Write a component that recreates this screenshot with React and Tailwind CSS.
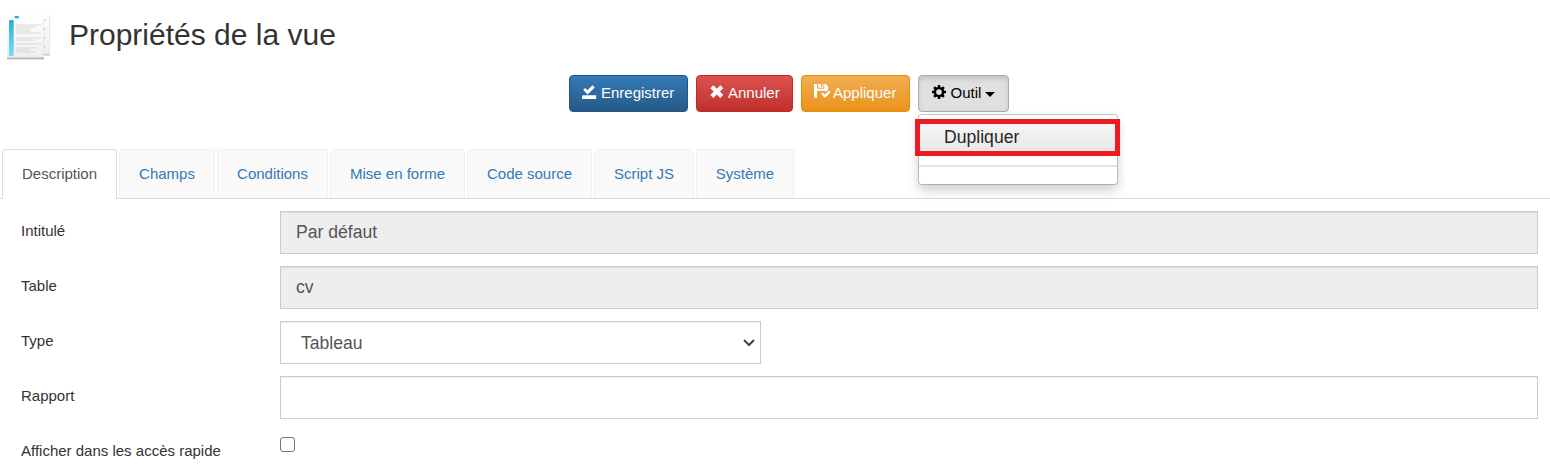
import React from "react";

const tabs = [
  { label: "Champs", width: "w-[96px]" },
  { label: "Conditions", width: "w-[111px]" },
  { label: "Mise en forme", width: "w-[135px]" },
  { label: "Code source", width: "w-[125px]" },
  { label: "Script JS", width: "w-[100px]" },
  { label: "Système", width: "w-[98px]" },
];

const button =
  "flex h-[37px] items-start rounded-[4px] border pt-[6px] text-[15px] leading-[22px] whitespace-nowrap";

const field =
  "h-[43px] border border-[#ccc] text-[17.6px] leading-[41px] text-[#555] shadow-[inset_0_1px_1px_rgba(0,0,0,0.075)]";

function DocumentIcon() {
  return (
    <svg width="52" height="62" viewBox="0 0 52 62" className="shrink-0">
      <defs>
        <linearGradient id="page" x1="0" y1="0" x2="0" y2="1">
          <stop offset="0" stopColor="#fefefe" />
          <stop offset="1" stopColor="#eeeeee" />
        </linearGradient>
        <linearGradient id="spine" x1="0" y1="0" x2="0" y2="1">
          <stop offset="0" stopColor="#27b0e2" />
          <stop offset="1" stopColor="#7fd8f7" />
        </linearGradient>
        <filter id="soft" x="-20%" y="-200%" width="140%" height="500%">
          <feGaussianBlur stdDeviation="0.7" />
        </filter>
      </defs>
      <rect x="7" y="57" width="37" height="2.4" fill="#b5b5b5" filter="url(#soft)" />
      <rect x="42" y="53" width="8" height="2.5" fill="#c6c6c6" filter="url(#soft)" />
      <rect x="12" y="14" width="37.5" height="40" fill="url(#page)" />
      <path d="M49.6 15v39" stroke="#e6e6e6" />
      <path d="M44.7 19v36" stroke="#d2d2d2" strokeWidth="1.4" strokeDasharray="2 7" />
      <rect x="14.5" y="16" width="4.5" height="2.2" rx="0.8" fill="#20acd9" />
      <rect x="7" y="19" width="36" height="38.5" fill="url(#page)" />
      <path d="M43.4 20v37" stroke="#e8e8e8" strokeWidth="0.8" />
      <rect x="9" y="20" width="4.7" height="36" rx="0.7" fill="url(#spine)" />
      <path
        d="M16 25.2h25M16 27.2h19M16 29.2h14M16 31.2h15M16 33.2h25M16 38.2h25M16 40.2h19M16 43.8h25M16 47.8h21M16 50h14M16 52h19"
        stroke="#dedede"
        strokeWidth="1.3"
      />
    </svg>
  );
}

function SaveIcon() {
  return (
    <svg width="15" height="15" viewBox="0 0 15 15" fill="currentColor" className="mt-[3px] shrink-0">
      <path d="M1.2 4.9 3.2 3 5.5 5.2 10.5.2 12.8 2.4 5.6 9.6Z" />
      <path d="M.8 10.2h13.4v3.7H0v-2.6Z" />
    </svg>
  );
}

function RemoveIcon() {
  return (
    <svg width="14" height="14" viewBox="0 0 14 14" fill="currentColor" className="mt-[3px] shrink-0">
      <path d="M3.3.2 6.8 3.7 10.3.2 13.3 3.2 9.9 6.6 13.3 10 10.3 13 6.8 9.5 3.3 13 .3 10 3.7 6.6 .3 3.2Z" />
    </svg>
  );
}

function FloppyIcon() {
  return (
    <svg width="17" height="15" viewBox="0 0 17 15" fill="currentColor" className="mt-[2px] shrink-0">
      <path d="M0 0h3v4.8h7.2V0h1.6l2.4 2.4v3.1l-2.3 2.2-1.2-.9H3v6.9H0Z" />
      <path d="M4.2 0h3v3.8h-3ZM8.6 0h.9v3.8H4.2V2.9h4.4Z" />
      <path d="M7.2 10.1 8.9 8.5l2 2 4-4 1.8 1.8-5.8 5.8Z" />
    </svg>
  );
}

function CogIcon() {
  return (
    <svg width="14" height="14" viewBox="0 0 14 14" className="mt-[3px] shrink-0">
      <circle cx="7" cy="7" r="4.1" fill="none" stroke="currentColor" strokeWidth="2.5" />
      <path
        d="M7 0v2.4M7 11.6V14M0 7h2.4M11.6 7H14M2.05 2.05l1.8 1.8M10.15 10.15l1.8 1.8M2.05 11.95l1.8-1.8M10.15 3.85l1.8-1.8"
        stroke="currentColor"
        strokeWidth="2.5"
      />
    </svg>
  );
}

function Row({ label, children }) {
  return (
    <div className="flex h-[55px]">
      <div className="w-[259px] shrink-0 pt-[9px] text-[15px] leading-[21px] text-[#333]">{label}</div>
      {children}
    </div>
  );
}

export default function App() {
  return (
    <div className="h-[474px] w-[1550px] overflow-hidden bg-white font-['Liberation_Sans',Arial,sans-serif] text-[#333]">
      <header className="flex h-[75px]">
        <DocumentIcon />
        <h1 className="pt-[18px] pl-[17px] text-[30px] leading-[33px]">Propriétés de la vue</h1>
      </header>

      <div className="flex h-[74px] gap-2 pl-[569px]">
        <button className={`${button} w-[119px] border-[#245580] bg-linear-to-b from-[#337ab7] to-[#265a88] pl-[12px] text-white`}>
          <SaveIcon />
          <span className="pl-[4px]">Enregistrer</span>
        </button>
        <button className={`${button} w-[97px] border-[#b92c28] bg-linear-to-b from-[#d9534f] to-[#c12e2a] pl-[13px] text-white`}>
          <RemoveIcon />
          <span className="pl-[4px]">Annuler</span>
        </button>
        <button className={`${button} w-[109px] border-[#e38d13] bg-linear-to-b from-[#f0ad4e] to-[#eb9316] pl-[12px] text-white`}>
          <FloppyIcon />
          <span className="pl-[2px]">Appliquer</span>
        </button>
        <div className="relative">
          <button className={`${button} w-[91px] border-[#adadad] bg-[#e0e0e0] pl-[13px] text-black shadow-[inset_0_3px_5px_rgba(0,0,0,0.125)]`}>
            <CogIcon />
            <span className="pl-[4.5px]">Outil</span>
            <svg width="10" height="5" viewBox="0 0 10 5" className="mt-[10px] ml-[4px]">
              <path d="M0 0h10L5 5Z" fill="currentColor" />
            </svg>
          </button>
          <div className="absolute top-[39px] left-0 h-[71px] w-[200px] rounded-[4px] border border-black/20 bg-white bg-clip-padding pt-[4px] shadow-[0_6px_12px_rgba(0,0,0,0.175)]">
            <div className="-mr-[3px] -ml-[4px] h-[37px] border-5 border-[#ed1c24] bg-linear-to-b from-[#f5f5f5] to-[#e8e8e8] pl-[24px] text-[17.6px] leading-[26px] text-[#262626]">
              Dupliquer
            </div>
            <div className="mt-[9px] h-[2px] bg-[#e5e5e5]" />
          </div>
        </div>
      </div>

      <nav className="flex h-[50px] gap-[2px] border-b border-[#ddd] pl-[2px] text-center text-[15px] leading-[48px]">
        <div className="h-[50px] w-[115px] rounded-t-[4px] border border-b-0 border-[#ddd] bg-white text-[#555]">Description</div>
        {tabs.map((tab) => (
          <div
            key={tab.label}
            className={`${tab.width} h-[49px] rounded-t-[4px] border border-b-0 border-[#f0f0f0] bg-[#f9f9f9] text-[#337ab7]`}
          >
            {tab.label}
          </div>
        ))}
      </nav>

      <main className="pt-[12px] pr-[12px] pl-[21px]">
        <Row label="Intitulé">
          <div className={`${field} flex-1 bg-[#eee] pl-[15px]`}>Par défaut</div>
        </Row>
        <Row label="Table">
          <div className={`${field} flex-1 bg-[#eee] pl-[15px]`}>cv</div>
        </Row>
        <Row label="Type">
          <div className={`${field} flex w-[481px] justify-between bg-white pr-[5px] pl-[20px]`}>
            <span className="pt-px">Tableau</span>
            <svg width="12" height="8" viewBox="0 0 12 8" className="mt-[17px]">
              <path d="m1 1 5 5 5-5" fill="none" stroke="#444" strokeWidth="2" />
            </svg>
          </div>
        </Row>
        <Row label="Rapport">
          <div className={`${field} flex-1 bg-white`} />
        </Row>
        <Row label="Afficher dans les accès rapide">
          <div className="mt-[6px] h-[15px] w-[15px] rounded-[3px] border border-[#767676] bg-white" />
        </Row>
      </main>
    </div>
  );
}
